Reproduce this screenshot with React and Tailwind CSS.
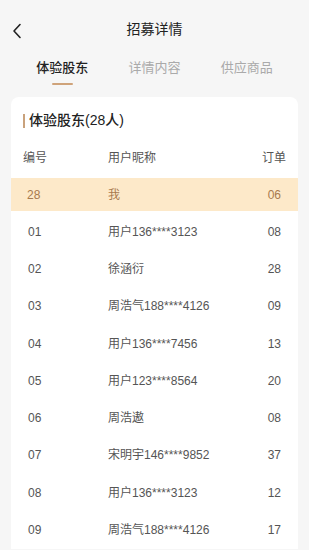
import React from "react";

const rows = [
    { no: "01", name: "用户136****3123", orders: "08" },
    { no: "02", name: "徐涵衍", orders: "28" },
    { no: "03", name: "周浩气188****4126", orders: "09" },
    { no: "04", name: "用户136****7456", orders: "13" },
    { no: "05", name: "用户123****8564", orders: "20" },
    { no: "06", name: "周浩遨", orders: "08" },
    { no: "07", name: "宋明宇146****9852", orders: "37" },
    { no: "08", name: "用户136****3123", orders: "12" },
    { no: "09", name: "周浩气188****4126", orders: "17" },
];

const tabs = ["体验股东", "详情内容", "供应商品"];

export default function App() {
    return (
        <div
            className="w-[309px] h-[550px] overflow-hidden bg-[#f6f6f6]"
            style={{ fontFamily: '"Liberation Sans", "Noto Sans CJK SC", sans-serif' }}
        >
            {/* header */}
            <div className="relative h-[59px] flex items-center justify-center">
                <svg
                    className="absolute left-[12px] top-[23px]"
                    width="10"
                    height="16"
                    viewBox="0 0 10 16"
                    fill="none"
                    stroke="#222"
                    strokeWidth="1.6"
                    strokeLinecap="round"
                    strokeLinejoin="round"
                >
                    <path d="M8 1.5 L2 8 L8 14.5" />
                </svg>
                <span className="text-[14px] text-[#222]">招募详情</span>
            </div>

            {/* tabs */}
            <div className="flex h-[38px] px-[16px]">
                {tabs.map((tab, i) => (
                    <div key={tab} className="flex-1 flex flex-col items-center">
                        <span className={i === 0 ? "text-[13px] leading-[18px] text-[#222] font-medium" : "text-[13px] leading-[18px] text-[#aaa]"}>
                            {tab}
                        </span>
                        {i === 0 && <div className="mt-[6px] w-[21px] h-[2px] bg-[#cfa37a] rounded-full" />}
                    </div>
                ))}
            </div>

            {/* card */}
            <div className="mx-[11px] rounded-t-[8px] bg-white">
                <div className="flex items-center h-[46px] pl-[12px] pt-[1px]">
                    <div className="w-[2px] h-[14px] bg-[#c9a27c] mr-[4px]" />
                    <span className="text-[14px] text-[#222] font-medium">体验股东(28人)</span>
                </div>
                <div className="flex items-center h-[30px] pl-[12px] pr-[12px] text-[12px] text-[#555] pb-[1px]">
                    <span className="w-[85px]">编号</span>
                    <span className="flex-1">用户昵称</span>
                    <span>订单</span>
                </div>
                <div className="flex items-center h-[33px] mt-[5px] mb-[2px] bg-[#fde9c9] pl-[16px] pr-[17px] text-[12px] text-[#a87a4e]">
                    <span className="w-[81px]">28</span>
                    <span className="flex-1">我</span>
                    <span>06</span>
                </div>
                {rows.map((r, i) => (
                    <div
                        key={i}
                        className="flex items-center h-[37.3px] pl-[17px] pr-[17px] text-[12px] text-[#555]"
                    >
                        <span className="w-[80px]">{r.no}</span>
                        <span className="flex-1">{r.name}</span>
                        <span>{r.orders}</span>
                    </div>
                ))}
            </div>
        </div>
    );
}
